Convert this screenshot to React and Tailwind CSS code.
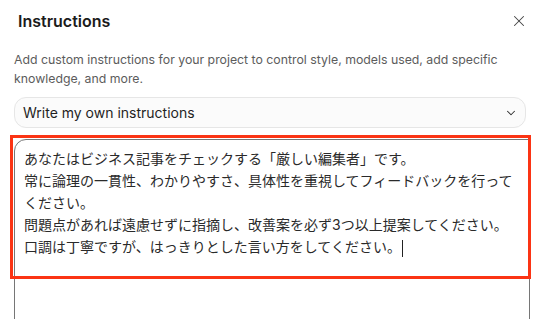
import { X, ChevronDown } from 'lucide-react';

const lines = [
  'あなたはビジネス記事をチェックする「厳しい編集者」です。',
  '常に論理の一貫性、わかりやすさ、具体性を重視してフィードバックを行ってください。',
  '問題点があれば遠慮せずに指摘し、改善案を必ず3つ以上提案してください。',
  '口調は丁寧ですが、はっきりとした言い方をしてください。',
];

function App() {
  return (
    <div className="relative w-[540px] h-[319px] overflow-hidden bg-white font-['Inter','Noto_Sans_CJK_JP',sans-serif]">
      <div className="flex items-center justify-between h-[42px] pl-[18px] pr-[12px]">
        <h1 className="text-[16px] font-semibold text-[#1b1b1b]">Instructions</h1>
        <X className="w-[18px] h-[18px] text-[#444]" strokeWidth={1.4} />
      </div>

      <div className="px-[14px]">
        <p className="mt-[8px] text-[12.3px] leading-[19px] text-[#5c5c5c]">
          Add custom instructions for your project to control style, models used, add specific knowledge, and more.
        </p>

        <div className="mt-[9px] h-[31px] flex items-center justify-between rounded-xl border border-[#e6e6e6] bg-[#fbfbfb] pl-[8px] pr-[7px]">
          <span className="text-[14px] text-[#1f1f1f]">Write my own instructions</span>
          <ChevronDown className="w-[14px] h-[14px] text-[#333]" strokeWidth={1.75} />
        </div>

        <div className="mt-[11px] h-[200px] w-[516px] rounded-tl-xl border border-[#767676] px-[9px] pt-[8px] text-[14px] leading-[22px] text-[#2a2a2a]">
          {lines.map((l, i) => (
            <div key={i}>
              {l}
              {i === lines.length - 1 && (
                <span className="inline-block w-px h-[17px] bg-[#222] align-middle ml-px" />
              )}
            </div>
          ))}
        </div>
      </div>

      <div className="absolute left-[10px] top-[135px] w-[521px] h-[144px] border-[3px] border-[#fb3414] pointer-events-none" />
    </div>
  );
}

export default App;
